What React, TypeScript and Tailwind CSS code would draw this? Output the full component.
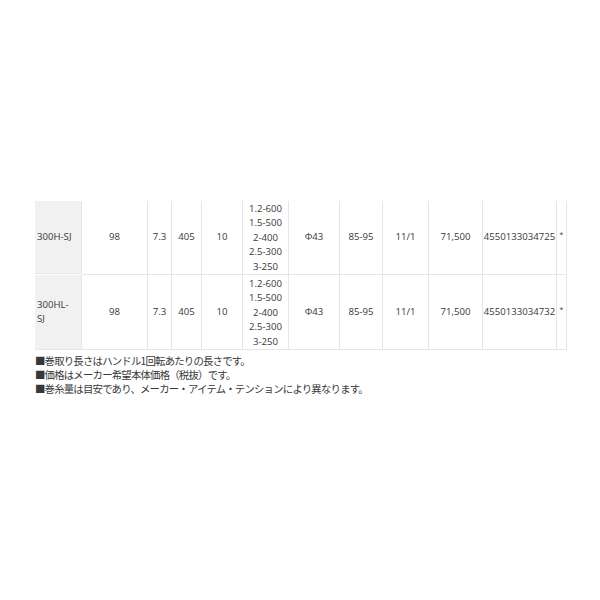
const cols = [47, 66, 24, 30, 41, 46, 51, 43, 46, 54, 74, 10];

const lineCap = ["1.2-600", "1.5-500", "2-400", "2.5-300", "3-250"];

const rows = [
  {
    model: "300H-SJ",
    jan: "4550133034725",
    pad: "pt-[1px]",
    height: "h-[73px]",
  },
  {
    model: "300HL-SJ",
    jan: "4550133034732",
    pad: "pt-[2px]",
    height: "h-[75px]",
  },
];

const notes = [
  "■巻取り長さはハンドル1回転あたりの長さです。",
  "■価格はメーカー希望本体価格（税抜）です。",
  "■巻糸量は目安であり、メーカー・アイテム・テンションにより異なります。",
];

function Cell({
  children,
  className = "",
}: {
  children?: React.ReactNode;
  className?: string;
}) {
  return (
    <div
      className={`flex items-center justify-center border-r border-b border-[#e6e6e6] text-center ${className}`}
    >
      {children}
    </div>
  );
}

export default function App() {
  return (
    <main className="min-h-[600px] w-[600px] bg-white pt-[201px] pl-[35px] text-[#383838] [font-family:'Open_Sans','Noto_Sans_CJK_JP',sans-serif]">
      <div
        className="grid w-[532px] text-[9.6px] leading-[14.4px]"
        style={{ gridTemplateColumns: cols.map((c) => `${c}px`).join(" ") }}
      >
        {rows.map((row) => (
          <div key={row.model} className="contents">
            <Cell
              className={`${row.height} justify-start bg-[#f1f1f1] pr-[9px] pl-[2px] text-left`}
            >
              {row.model}
            </Cell>
            <Cell>98</Cell>
            <Cell>7.3</Cell>
            <Cell>405</Cell>
            <Cell>10</Cell>
            <Cell className={`items-start ${row.pad}`}>
              <div className="flex flex-col">
                {lineCap.map((l) => (
                  <span key={l}>{l}</span>
                ))}
              </div>
            </Cell>
            <Cell>Φ43</Cell>
            <Cell>85-95</Cell>
            <Cell>11/1</Cell>
            <Cell>71,500</Cell>
            <Cell className="whitespace-nowrap">{row.jan}</Cell>
            <Cell className="pb-[4px] text-[7px]">*</Cell>
          </div>
        ))}
      </div>
      <div className="mt-[4px] flex flex-col text-[10.4px] leading-[14.2px] tracking-[-0.8px] [font-family:'Noto_Sans_CJK_JP',sans-serif]">
        {notes.map((n) => (
          <p key={n}>{n}</p>
        ))}
      </div>
    </main>
  );
}
